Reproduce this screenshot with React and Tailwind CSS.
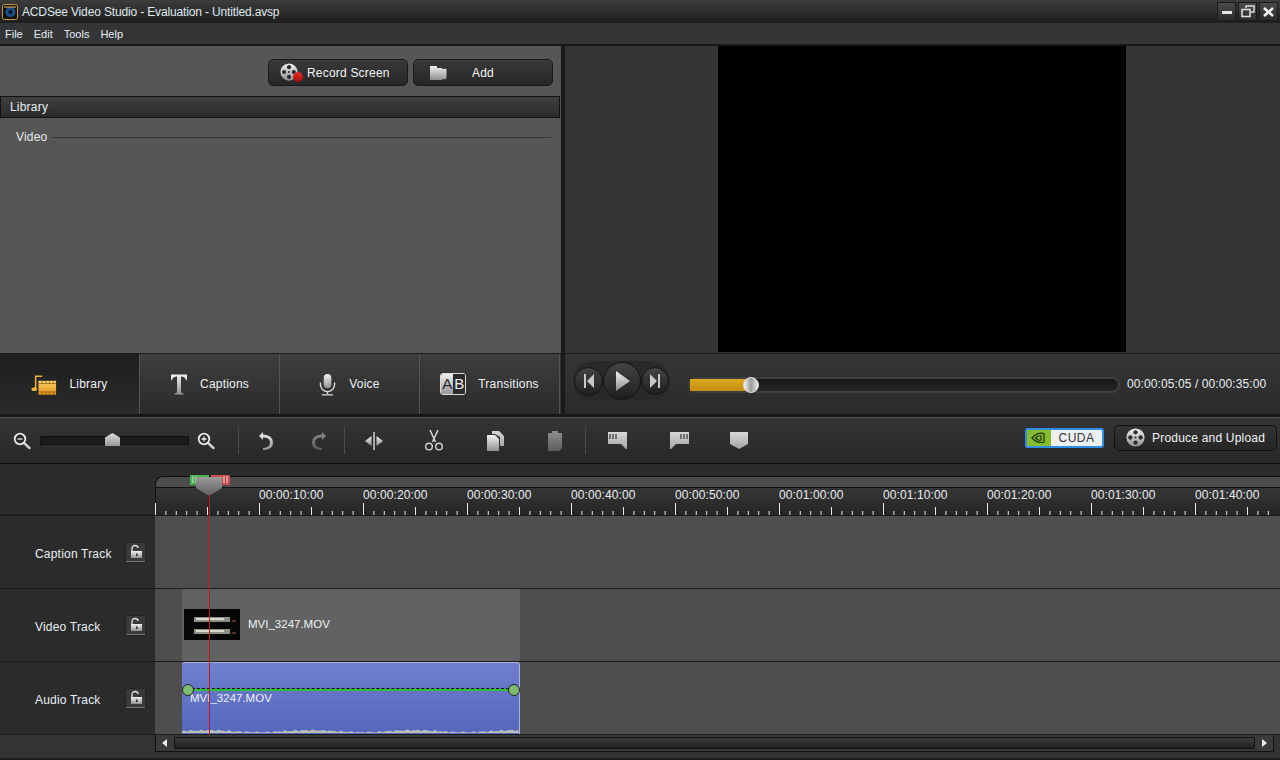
import React from "react";

const Defs = () => (
  <svg width="0" height="0" className="absolute">
    <defs>
      <linearGradient id="gSilver" x1="0" y1="0" x2="0" y2="1"><stop offset="0" stopColor="#f2f2f2" /><stop offset="1" stopColor="#8f8f8f" /></linearGradient>
      <linearGradient id="gGrey" x1="0" y1="0" x2="0" y2="1"><stop offset="0" stopColor="#d8d8d8" /><stop offset="1" stopColor="#a4a4a4" /></linearGradient>
      <linearGradient id="gDim" x1="0" y1="0" x2="0" y2="1"><stop offset="0" stopColor="#8a8a8a" /><stop offset="1" stopColor="#5c5c5c" /></linearGradient>
      <linearGradient id="gGold" x1="0" y1="0" x2="0" y2="1"><stop offset="0" stopColor="#ffd772" /><stop offset="1" stopColor="#e08f12" /></linearGradient>
      <linearGradient id="gHead" x1="0" y1="0" x2="0" y2="1"><stop offset="0" stopColor="#9a9a9a" /><stop offset="1" stopColor="#5e5e5e" /></linearGradient>
    </defs>
  </svg>
);

const Reel = ({ size = 24 }) => (
  <svg width={size} height={size} viewBox="0 0 24 24">
    <circle cx="12" cy="12" r="11.500" fill="url(#gSilver)" />
    <circle cx="12" cy="5.500" r="2.700" fill="#2a2a2a" />
    <circle cx="12" cy="18.500" r="2.700" fill="#2a2a2a" />
    <circle cx="5.500" cy="12" r="2.700" fill="#2a2a2a" />
    <circle cx="18.500" cy="12" r="2.700" fill="#2a2a2a" />
    <circle cx="12" cy="12" r="1.300" fill="#2a2a2a" />
  </svg>
);

const Lock = () => (
  <div className="w-[19px] h-[19px] bg-[#3a3a3a] border-b border-[#777] shadow-[0_0_0_0.5px_#1c1c1c] flex items-center justify-center">
    <svg width="14" height="15" viewBox="0 0 14 15">
      <path d="M3 7V4.500C3 2.500 4.400 1.500 6 1.500S9 2.500 9.300 4" fill="none" stroke="#e0e0e0" strokeWidth="1.300" />
      <rect x="2" y="7" width="11" height="7" fill="url(#gSilver)" />
      <rect x="7" y="9.500" width="1.600" height="2.500" fill="#333" />
    </svg>
  </div>
);

const Track = ({ label, h, children }) => (
  <div className={`flex border-b border-[#1c1c1c] ${h}`}>
    <div className="w-[155px] shrink-0 bg-[#2b2b2b] flex items-center pl-[35px] pr-[10px]">
      <span className="flex-1 text-[12px] text-[#e6eef5] whitespace-nowrap mt-[4px]">{label}</span>
      <Lock />
    </div>
    <div className="flex-1 bg-[#4e4e4e] pl-[27px] flex items-stretch">{children}</div>
  </div>
);

const Tab = ({ icon, label, active, gap = "gap-[12px]" }) => (
  <div className={`w-[140px] h-full flex items-center justify-center ${gap} border-r border-[#555] text-[12px] text-[#eef2f5] ${active ? "bg-linear-to-b from-[#1e1e1e] to-[#2b2b2b]" : "bg-linear-to-b from-[#3f3f3f] to-[#2a2a2a]"}`}>
    {icon}
    <span>{label}</span>
  </div>
);

const ToolIcon = ({ w, children }) => (
  <div className={`${w} flex justify-center items-center shrink-0`}>{children}</div>
);

const Mag = ({ plus }) => (
  <svg width="18" height="18" viewBox="0 0 18 18">
    <path d="M11 11l5.500 5" stroke="#cfcfcf" strokeWidth="2.400" strokeLinecap="round" />
    <circle cx="7" cy="7" r="5.300" fill="#2a2a2a" stroke="#e8e8e8" strokeWidth="1.800" />
    <path d={plus ? "M4.500 7h5M7 4.500v5" : "M4.500 7h5"} stroke="#eee" strokeWidth="1.300" />
  </svg>
);

const Marker = ({ type }) => (
  <svg width="20" height="20" viewBox="0 0 20 20">
    {type === "l" && <><path d="M1 1h19v17h-1l-5-5H1z" fill="url(#gGrey)" /><path d="M3 3v5M6 3v5M9 3v5" stroke="#333" strokeWidth="1.200" /></>}
    {type === "r" && <><path d="M1 1h19v12H7l-5 5H1z" fill="url(#gGrey)" /><path d="M12 3v5M15 3v5M18 3v5" stroke="#333" strokeWidth="1.200" /></>}
    {type === "c" && <path d="M1 1h18v12l-9 5-9-5z" fill="url(#gGrey)" />}
  </svg>
);

const labels = ["00:00:10:00","00:00:20:00","00:00:30:00","00:00:40:00","00:00:50:00","00:01:00:00","00:01:10:00","00:01:20:00","00:01:30:00","00:01:40:00"];

const Ticks = () => {
  const t = [];
  for (let i = 0; i < 108; i++) {
    const x = i * 10.4 + 0.5;
    const h = i % 10 === 0 ? 12 : i % 5 === 0 ? 8 : 4;
    t.push(<line key={i} x1={x} x2={x} y1={12 - h} y2={12} stroke="#e8e8e8" />);
  }
  return <svg width="1125" height="12" className="block -ml-px">{t}</svg>;
};

const Wave = () => {
  let d = "M0 4";
  for (let i = 0; i <= 337; i += 2) {
    const n = Math.sin(i * 0.9) * Math.sin(i * 0.23) + Math.sin(i * 0.061);
    const y = Math.max(0, Math.min(3.500, 2.200 - n));
    d += `L${i} ${y.toFixed(1)}`;
  }
  d += "L337 4Z";
  return <svg width="338" height="4" className="block mb-px"><path d={d} fill="#bdbdb8" /></svg>;
};

export default function App() {
  return (
    <div className="relative w-[1280px] h-[760px] overflow-hidden bg-[#333] flex flex-col font-['Liberation_Sans',sans-serif] text-[12px] tracking-[0.2px]">
      <Defs />
      {/* title */}
      <div className="h-[23px] shrink-0 flex items-center bg-linear-to-b from-[#3c3c3c] to-[#1e1e1e]">
        <svg width="16" height="16" viewBox="0 0 16 16" className="ml-[2px] mr-[4px]">
          <rect x="0.500" y="0.500" width="15" height="15" rx="2" fill="#111" stroke="#c89a3a" />
          <circle cx="8.500" cy="8" r="5" fill="#1c4f8e" />
          <circle cx="8.500" cy="8" r="2.200" fill="#0a1a30" />
          <path d="M2 3h12" stroke="#f0c060" />
        </svg>
        <span className="text-[12px] tracking-[-0.15px] text-[#dfe8ee] whitespace-nowrap">ACDSee Video Studio - Evaluation - Untitled.avsp</span>
        <div className="ml-auto flex gap-[2px] pr-[2px]">
          <div className="w-[19px] h-[19px] bg-linear-to-b from-[#4b4b4b] to-[#2c2c2c] border border-[#1a1a1a] flex items-center justify-center"><div className="w-[10px] h-[3px] mt-[2px] bg-[#e4e4e4]" /></div>
          <div className="w-[19px] h-[19px] bg-linear-to-b from-[#4b4b4b] to-[#2c2c2c] border border-[#1a1a1a] flex items-center justify-center">
            <svg width="14" height="13" viewBox="0 0 14 13"><path d="M5 3V1h8v6h-3" fill="none" stroke="#ddd" strokeWidth="1.400" /><rect x="1" y="4.500" width="8" height="7" fill="none" stroke="#ddd" strokeWidth="1.600" /></svg>
          </div>
          <div className="w-[19px] h-[19px] bg-linear-to-b from-[#4b4b4b] to-[#2c2c2c] border border-[#1a1a1a] flex items-center justify-center">
            <svg width="11" height="10" viewBox="0 0 11 10"><path d="M1 1l9 8M10 1L1 9" stroke="#eee" strokeWidth="2.600" /></svg>
          </div>
        </div>
      </div>
      {/* menu */}
      <div className="h-[21px] shrink-0 flex items-center gap-[11px] pl-[5px] pt-[2px] bg-[#333536] text-[11px] tracking-normal text-[#e6eef4]">
        <span>File</span><span>Edit</span><span>Tools</span><span>Help</span>
      </div>
      <div className="h-[2px] shrink-0 bg-[#171717]" />
      {/* upper */}
      <div className="h-[368px] shrink-0 flex">
        <div className="w-[561px] shrink-0 flex flex-col">
          <div className="h-[307px] bg-[#565656] flex flex-col">
            <div className="h-[50px] shrink-0 flex justify-end items-end gap-[5px] pr-[8px] pb-[10px]">
              <div className="w-[140px] h-[27px] rounded-[5px] border border-[#1a1a1a] bg-linear-to-b from-[#3a3a3a] to-[#262626] flex items-center pl-[11px] text-[#f0f4f8]">
                <div className="relative w-[27px] h-[19px]">
                  <Reel size={18} />
                  <div className="absolute right-[4px] bottom-0 w-[10px] h-[10px] rounded-full bg-linear-to-b from-[#e02a2a] to-[#a80c0c]" />
                </div>
                <span>Record Screen</span>
              </div>
              <div className="w-[140px] h-[27px] rounded-[5px] border border-[#1a1a1a] bg-linear-to-b from-[#3a3a3a] to-[#262626] flex items-center pl-[15px] text-[#f0f4f8]">
                <svg width="19" height="15" viewBox="0 0 19 15" className="mr-[24px]"><path d="M1 1h7v2h10v12H1z" fill="url(#gSilver)" /><path d="M13 3.500h5v11h-5" fill="none" stroke="#222" strokeWidth="0.800" /></svg>
                <span>Add</span>
              </div>
            </div>
            <div className="h-[22px] w-[560px] shrink-0 flex items-center pl-[9px] border border-[#111] bg-linear-to-b from-[#3f3f3f] to-[#2b2b2b] text-[#e8eef3]">Library</div>
            <div className="flex items-center gap-[5px] pl-[16px] pr-[10px] mt-[10px] text-[#e4eaee]">
              <span>Video</span>
              <div className="flex-1 h-px bg-[#363636]" />
            </div>
          </div>
          <div className="h-px bg-[#1a1a1a]" />
          <div className="h-[60px] flex">
            <Tab active label="Library" icon={
              <svg width="26" height="23" viewBox="0 0 28 24"><path d="M5 17V3h7" fill="none" stroke="#f0b83a" strokeWidth="1.600" /><ellipse cx="3.500" cy="17" rx="3" ry="2" fill="#f0b83a" /><rect x="8" y="8" width="19" height="15" fill="url(#gGold)" /><path d="M8 11h19M8 20h19M12 8v3M16 8v3M20 8v3M24 8v3M12 20v3M16 20v3M20 20v3M24 20v3" stroke="#8a5a10" strokeWidth="0.800" /></svg>
            } />
            <Tab label="Captions" icon={
              <svg width="18" height="23" viewBox="0 0 18 22"><path d="M1 1h16v6l-1-.5Q15 3 11 3v16l2.500 1v1h-9v-1l2.500-1V3Q3 3 2 6.500L1 7z" fill="url(#gSilver)" /></svg>
            } />
            <Tab label="Voice" gap="gap-[13px]" icon={
              <svg width="17" height="23" viewBox="0 0 18 24"><rect x="5" y="1" width="8" height="15" rx="4" fill="url(#gSilver)" /><path d="M1.500 10v2a7.500 7.500 0 0 0 15 0v-2" fill="none" stroke="#ddd" strokeWidth="1.500" /><path d="M9 19v3M3 23h12" stroke="#ddd" strokeWidth="1.500" /></svg>
            } />
            <Tab label="Transitions" icon={
              <div className="relative w-[26px] h-[22px] rounded-[3px] border border-[#ddd] flex overflow-hidden tracking-normal text-[15px] leading-[20px]">
                <span className="w-[12px] bg-linear-to-b from-[#eee] to-[#999] text-[#222] text-center">A</span>
                <span className="flex-1 bg-[#2b2b2b] text-[#eee] text-center">B</span>
              </div>
            } />
          </div>
        </div>
        <div className="w-[4px] shrink-0 bg-[#1a1a1a]" />
        <div className="flex-1 flex flex-col">
          <div className="h-[307px] flex justify-center pb-px bg-[#343635]">
            <div className="w-[408px] h-full bg-black -ml-[1px]" />
          </div>
          <div className="h-px bg-[#1a1a1a]" />
          <div className="h-[60px] flex items-center bg-linear-to-b from-[#353535] to-[#2b2b2b]">
            <div className="flex items-center ml-[8px] -mt-[6px] rounded-full bg-[#292929] p-[1px]">
              <div className="w-[29px] h-[29px] rounded-full bg-linear-to-b from-[#444] to-[#1f1f1f] border border-[#141414] flex items-center justify-center">
                <svg width="12" height="14" viewBox="0 0 12 14"><path d="M1 0h2v14H1zM11 0v14L4 7z" fill="#c8c8c8" /></svg>
              </div>
              <div className="w-[38px] h-[38px] rounded-full bg-linear-to-b from-[#444] to-[#1f1f1f] border border-[#141414] flex items-center justify-center pl-[2px]">
                <svg width="14" height="20" viewBox="0 0 14 20"><path d="M0 0l14 10L0 20z" fill="url(#gSilver)" /></svg>
              </div>
              <div className="w-[28px] h-[28px] rounded-full bg-linear-to-b from-[#444] to-[#1f1f1f] border border-[#141414] flex items-center justify-center">
                <svg width="12" height="14" viewBox="0 0 12 14"><path d="M11 0H9v14h2zM1 0v14l7-7z" fill="#c8c8c8" /></svg>
              </div>
            </div>
            <div className="relative ml-[18px] mt-[2px] w-[432px] h-[16px] rounded-full border-2 border-[#3f3f3f] bg-linear-to-b from-[#161616] to-[#262626]">
              <div className="w-[60px] h-full bg-linear-to-b from-[#dca91c] to-[#c48f10]" />
              <div className="absolute left-[53px] -top-[2px] w-[16px] h-[16px] rounded-full bg-linear-to-r from-[#f4f4f4] via-[#9a9a9a] to-[#eeeeee] border border-[#ddd]" />
            </div>
            <span className="ml-[7px] text-[#e8eef4] tracking-[0.1px] whitespace-nowrap">00:00:05:05 / 00:00:35:00</span>
          </div>
        </div>
      </div>
      <div className="h-[3px] shrink-0 bg-[#171717]" />
      {/* toolbar */}
      <div className="h-[47px] shrink-0 flex items-center border-t border-[#555] border-b-[1px] border-b-[#111] bg-linear-to-b from-[#353535] to-[#272727]">
        <div className="w-[40px] pl-[13px]"><Mag /></div>
        <div className="relative w-[149px] h-[9px] border border-[#111] bg-[#1c1c1c]">
          <div className="absolute left-[64px] -top-[4px] w-[15px] h-[13px] bg-linear-to-b from-[#ddd] to-[#999] [clip-path:polygon(50%_0,100%_35%,100%_100%,0_100%,0_35%)]" />
        </div>
        <div className="ml-[8px]"><Mag plus /></div>
        <div className="w-px h-[27px] bg-[#4c4c4c] ml-[23px]" />
        <ToolIcon w="w-[54px]">
          <svg width="16" height="20" viewBox="0 0 16 20"><path d="M5 1L1 5l4 4V6.500Q12 6.500 12 11.500T5 17v2Q15 19 15 11.500T5 3.500z" fill="url(#gSilver)" /></svg>
        </ToolIcon>
        <ToolIcon w="w-[51px]">
          <svg width="16" height="20" viewBox="0 0 16 20"><path d="M11 1l4 4-4 4V6.500Q4 6.500 4 11.500T11 17v2Q1 19 1 11.500T11 3.500z" fill="url(#gDim)" /></svg>
        </ToolIcon>
        <div className="w-px h-[27px] bg-[#4c4c4c]" />
        <ToolIcon w="w-[58px]">
          <svg width="20" height="18" viewBox="0 0 20 18"><rect x="9.300" y="0" width="1.500" height="18" fill="#d0d0d0" /><path d="M7.500 4v10L1 9zM12.500 4v10L19 9z" fill="url(#gSilver)" /></svg>
        </ToolIcon>
        <ToolIcon w="w-[62px]">
          <svg width="20" height="21" viewBox="0 0 20 21"><path d="M6 0l5.500 12M14 0L8.500 12" stroke="#d8d8d8" strokeWidth="1.500" /><circle cx="5" cy="16.500" r="3.300" fill="none" stroke="#ccc" strokeWidth="1.500" /><circle cx="15" cy="16.500" r="3.300" fill="none" stroke="#ccc" strokeWidth="1.500" /></svg>
        </ToolIcon>
        <ToolIcon w="w-[60px]">
          <svg width="17" height="20" viewBox="0 0 17 20"><path d="M5 0h7l5 5v10h-4V6L8 3H5z" fill="url(#gGrey)" /><path d="M0 4h8l4 4v12H0z" fill="url(#gSilver)" /></svg>
        </ToolIcon>
        <ToolIcon w="w-[60px]">
          <svg width="16" height="20" viewBox="0 0 16 20"><rect x="5" y="0" width="6" height="3" fill="#888" /><path d="M1 2h14v15l-3 3H1z" fill="url(#gDim)" /></svg>
        </ToolIcon>
        <div className="w-px h-[27px] bg-[#4c4c4c]" />
        <ToolIcon w="w-[62px]"><Marker type="l" /></ToolIcon>
        <ToolIcon w="w-[61px]"><Marker type="r" /></ToolIcon>
        <ToolIcon w="w-[60px]"><Marker type="c" /></ToolIcon>
        <div className="ml-auto flex items-center gap-[10px] pr-[3px] mb-[6px]">
          <div className="w-[79px] h-[20px] rounded-[3px] border-2 border-[#2f8fe8] flex overflow-hidden bg-[#eef0f2]">
            <div className="w-[24px] bg-[#86bd2d] flex items-center justify-center">
              <svg width="16" height="12" viewBox="0 0 16 12"><path d="M1 6Q6 0 13 1.500V10Q7 12 1 6zM4.500 6Q7 3 10 4V8Q7 9 4.500 6z" fill="none" stroke="#1d3300" strokeWidth="1.200" /></svg>
            </div>
            <span className="flex-1 text-center text-[#333] text-[12px] leading-[16px] tracking-[0.5px]">CUDA</span>
          </div>
          <div className="w-[163px] h-[26px] rounded-[5px] border border-[#111] bg-linear-to-b from-[#343434] to-[#252525] flex items-center pl-[11px] gap-[7px] text-[#f0f4f8]">
            <Reel size={19} />
            <span>Produce and Upload</span>
          </div>
        </div>
      </div>
      {/* ruler */}
      <div className="h-[52px] shrink-0 flex border-b-2 border-[#1c1c1c]">
        <div className="w-[155px] shrink-0 bg-[#2b2b2b]" />
        <div className="flex-1 flex flex-col bg-[#2b2b2b]">
          <div className="h-[11px] mt-[12px] bg-[#4c4c4c] rounded-tl-[8px] border-t border-l border-[#111] shrink-0" />
          <div className="flex-1 flex flex-col justify-end border-l border-t border-[#111] bg-linear-to-b from-[#363636] to-[#252525]">
            <div className="flex h-[15px] pl-[103px] text-[12px] leading-[15px] tracking-[0.1px] text-[#e8eef4] whitespace-nowrap">
              {labels.map((l) => <span key={l} className="w-[104px] shrink-0">{l}</span>)}
            </div>
            <Ticks />
          </div>
        </div>
      </div>
      {/* tracks */}
      <Track label="Caption Track" h="h-[73px]" />
      <Track label="Video Track" h="h-[73px]">
        <div className="w-[338px] bg-[#626262] rounded-t-[3px] flex items-center pl-[2px] pb-[1px] text-[11.5px] tracking-normal text-[#eef2f5]">
          <svg width="56" height="31" viewBox="0 0 56 31" className="mr-[8px]">
            <rect width="56" height="31" fill="#060606" />
            <rect x="10" y="8" width="36" height="5" fill="#8d9084" />
            <rect x="10" y="20" width="36" height="5" fill="#8d9084" />
            <rect x="12" y="9" width="28" height="2" fill="#d8d8cc" />
            <rect x="12" y="21" width="28" height="2" fill="#d8d8cc" />
            <rect x="48" y="11" width="4" height="2" fill="#5a3020" />
            <rect x="48" y="23" width="4" height="2" fill="#5a3020" />
          </svg>
          <span>MVI_3247.MOV</span>
        </div>
      </Track>
      <Track label="Audio Track" h="h-[73px]">
        <div className="relative w-[338px] bg-linear-to-b from-[#707fcc] to-[#5566bd] rounded-t-[3px] border-t border-r border-[#aab3e0] flex flex-col justify-end text-[11.5px] tracking-normal text-[#eef2f5]">
          <div className="absolute left-[8px] top-[27px]">MVI_3247.MOV</div>
          <div className="absolute left-[5px] right-[5px] top-[25px] border-t border-dashed border-[#111]" />
          <div className="absolute left-[5px] right-[5px] top-[26px] h-[2px] bg-[#2fc02f]" />
          <div className="absolute left-0 top-[21px] w-[12px] h-[12px] rounded-full bg-[#7dbb74] border border-[#222]" />
          <div className="absolute -right-[1px] top-[21px] w-[12px] h-[12px] rounded-full bg-[#7dbb74] border border-[#222]" />
          <Wave />
        </div>
      </Track>
      {/* scrollbar */}
      <div className="h-[17px] shrink-0 flex">
        <div className="w-[155px] shrink-0 bg-[#333]" />
        <div className="w-[1119px] flex items-center border-l border-r border-b border-[#111] bg-[#3a3a3a]">
          <svg width="18" height="12" viewBox="0 0 18 12" className="shrink-0"><path d="M11 2v8L6 6z" fill="#eee" /></svg>
          <div className="flex-1 h-[12px] border border-[#111] rounded-[2px] bg-linear-to-b from-[#3c3c3c] to-[#202020]" />
          <svg width="18" height="12" viewBox="0 0 18 12" className="shrink-0"><path d="M7 2v8l5-4z" fill="#eee" /></svg>
        </div>
      </div>
      <div className="flex-1 bg-[#333] border-b-2 border-[#1c1c1c]" />
      {/* playhead */}
      <svg width="41" height="10" viewBox="0 0 41 10" className="absolute left-[190px] top-[475px]">
        <rect x="0" y="0" width="19" height="10" fill="#4caf50" />
        <rect x="21" y="0" width="19" height="10" fill="#c85050" />
        <path d="M3 1v7M6 1v7M34 1v7M37 1v7" stroke="#e8f0e8" strokeWidth="0.800" />
      </svg>
      <svg width="26" height="19" viewBox="0 0 26 19" className="absolute left-[196px] top-[477px]"><path d="M0 0h26v11l-13 8-13-8z" fill="url(#gHead)" /></svg>
      <div className="absolute left-[209px] top-[495px] w-px h-[240px] bg-[#c01818]" />
    </div>
  );
}
